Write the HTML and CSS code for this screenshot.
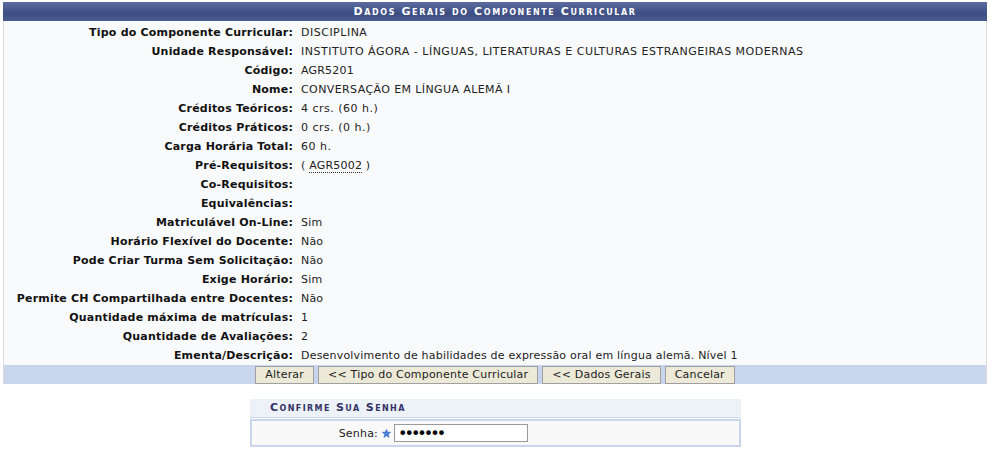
FILE: index.html
```html
<!DOCTYPE html>
<html lang="pt-BR">
<head>
<meta charset="utf-8">
<title>Dados Gerais do Componente Curricular</title>
<link rel="stylesheet" href="styles.css">
</head>
<body>
<div class="panel">
  <div class="panel-title">Dados Gerais do Componente Curricular</div>
  <div class="fields">
    <div class="row"><span class="lbl">Tipo do Componente Curricular:</span><span class="val up">DISCIPLINA</span></div>
    <div class="row"><span class="lbl">Unidade Responsável:</span><span class="val up">INSTITUTO ÁGORA - LÍNGUAS, LITERATURAS E CULTURAS ESTRANGEIRAS MODERNAS</span></div>
    <div class="row"><span class="lbl">Código:</span><span class="val">AGR5201</span></div>
    <div class="row"><span class="lbl">Nome:</span><span class="val up2">CONVERSAÇÃO EM LÍNGUA ALEMÃ I</span></div>
    <div class="row"><span class="lbl">Créditos Teóricos:</span><span class="val num">4 crs. (60 h.)</span></div>
    <div class="row"><span class="lbl">Créditos Práticos:</span><span class="val num">0 crs. (0 h.)</span></div>
    <div class="row"><span class="lbl">Carga Horária Total:</span><span class="val num">60 h.</span></div>
    <div class="row"><span class="lbl">Pré-Requisitos:</span><span class="val">( <abbr class="code" title="AGR5002">AGR5002</abbr> )</span></div>
    <div class="row"><span class="lbl">Co-Requisitos:</span><span class="val"></span></div>
    <div class="row"><span class="lbl">Equivalências:</span><span class="val"></span></div>
    <div class="row"><span class="lbl">Matriculável On-Line:</span><span class="val">Sim</span></div>
    <div class="row"><span class="lbl">Horário Flexível do Docente:</span><span class="val">Não</span></div>
    <div class="row"><span class="lbl">Pode Criar Turma Sem Solicitação:</span><span class="val">Não</span></div>
    <div class="row"><span class="lbl">Exige Horário:</span><span class="val">Sim</span></div>
    <div class="row"><span class="lbl">Permite CH Compartilhada entre Docentes:</span><span class="val">Não</span></div>
    <div class="row"><span class="lbl">Quantidade máxima de matrículas:</span><span class="val">1</span></div>
    <div class="row"><span class="lbl">Quantidade de Avaliações:</span><span class="val">2</span></div>
    <div class="row"><span class="lbl">Ementa/Descrição:</span><span class="val">Desenvolvimento de habilidades de expressão oral em língua alemã. Nível 1</span></div>
  </div>
  <div class="actions">
    <button class="btn" type="button">Alterar</button>
    <button class="btn" type="button">&lt;&lt; Tipo do Componente Curricular</button>
    <button class="btn" type="button">&lt;&lt; Dados Gerais</button>
    <button class="btn" type="button">Cancelar</button>
  </div>
</div>

<div class="confirm">
  <div class="confirm-title">Confirme Sua Senha</div>
  <div class="confirm-body">
    <span class="confirm-lbl">Senha:</span>
    <svg class="star" width="9" height="9" viewBox="0 0 10 10" aria-hidden="true"><polygon points="5,0.3 6.3,3.4 9.7,3.6 7.1,5.8 7.9,9.4 5,7.5 2.1,9.4 2.9,5.8 0.3,3.6 3.7,3.4" fill="#4a7fd6" stroke="#2e5fb8" stroke-width="0.5"/></svg>
    <input class="pwd" type="password" value="1234567">
  </div>
</div>
</body>
</html>
```
FILE: styles.css
```css
html, body {
  margin: 0;
  padding: 0;
  background: #ffffff;
}
body {
  font-family: "DejaVu Sans", Verdana, sans-serif;
  font-size: 11px;
  color: #222222;
  padding-top: 2px;
}
.panel {
  margin: 0 4px 0 3px;
}
.panel-title {
  height: 19px;
  line-height: 19px;
  background: linear-gradient(#5d6c9f 0%, #45548a 45%, #3e4d82 60%, #4b5a8f 100%);
  color: #ffffff;
  font-weight: bold;
  font-variant: small-caps;
  letter-spacing: 1.6px;
  text-align: center;
  font-size: 11px;
}
.fields {
  background: #f9fafc;
  border-left: 1px solid #dddddd;
  border-right: 1px solid #dddddd;
  padding-top: 2px;
}
.row {
  display: flex;
  height: 19px;
  line-height: 19px;
}
.lbl {
  width: 289px;
  flex: none;
  text-align: right;
  font-weight: bold;
  color: #111111;
  letter-spacing: 0.2px;
}
.val {
  padding-left: 8px;
  color: #222222;
  letter-spacing: 0.2px;
}
.val.up {
  letter-spacing: 0.5px;
}
.val.up2 {
  letter-spacing: 0.4px;
}
.val.num {
  letter-spacing: 0.5px;
}
.code {
  text-decoration: none;
  border-bottom: 1px dotted #333333;
}
.actions {
  background: #c8d5ec;
  border-left: 1px solid #dddddd;
  border-right: 1px solid #dddddd;
  height: 19px;
  display: flex;
  justify-content: center;
  align-items: center;
  gap: 4px;
}
.btn {
  font-family: "DejaVu Sans", Verdana, sans-serif;
  font-size: 11px;
  letter-spacing: 0.2px;
  color: #222222;
  background: #ece9d8;
  border: 1px solid #a0a0a0;
  height: 18px;
  padding: 0 9px;
  margin: 0;
  line-height: 14px;
}
.confirm {
  width: 491px;
  margin: 15px auto 0;
}
.confirm-title {
  background: #edf1f8;
  height: 18px;
  line-height: 18px;
  padding-left: 20px;
  font-weight: bold;
  font-variant: small-caps;
  letter-spacing: 1.4px;
  color: #333366;
  border-bottom: 1px solid #c8d5ec;
}
.confirm-body {
  margin-top: 1px;
  background: #f9f9f9;
  border: 2px solid #c8d5ec;
  height: 24px;
  display: flex;
  align-items: center;
}
.confirm-lbl {
  width: 126px;
  text-align: right;
  color: #222222;
  letter-spacing: 0.2px;
}
.star {
  margin: 0 3px 0 4px;
}
.pwd {
  width: 126px;
  height: 14px;
  padding: 1px 3px;
  border: 1px solid #999999;
  font-family: "DejaVu Sans", Verdana, sans-serif;
  font-size: 16px;
  line-height: 14px;
  letter-spacing: -3px;
  color: #000000;
  margin: 0;
}
```
